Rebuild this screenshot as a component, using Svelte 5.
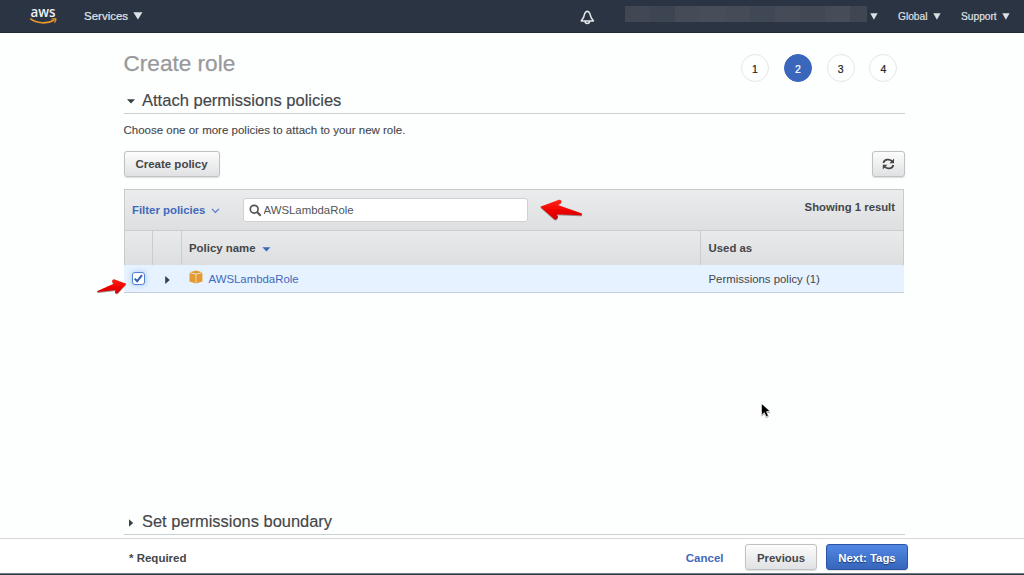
<script>
  const steps = [1, 2, 3, 4];
  const current = 2;
  let query = $state('AWSLambdaRole');
  let checked = $state(true);
  const mosaic = ['#414854', '#3e4552', '#454c58', '#474e5a', '#454c58', '#414855', '#454c58', '#424955', '#464d58', '#404753'];
</script>

<div class="page">
  <header>
    <svg class="logo" width="28" height="19" viewBox="0 0 28 19">
      <text x=".5" y="10.6" textLength="25" lengthAdjust="spacingAndGlyphs">aws</text>
      <path d="M.3 12.7C6.5 17.7 17.5 18.1 24 14.3" fill="none" stroke="#e9962a" stroke-width="1.6" />
      <path d="M21.2 13.1c2-1.1 4.6-1 5.1-.4.3.8-.4 3-1.8 4.4l.5-3.4z" fill="#e9962a" stroke="#e9962a" stroke-width=".4" />
    </svg>
    <span class="services">Services</span>
    <svg class="tri big" width="10" height="8" viewBox="0 0 10 8"><path d="M.3.3h9.2L4.9 7.5z" /></svg>
    <svg class="bell" width="15" height="15" viewBox="0 0 15 15" fill="none" stroke="#e2e7e8" stroke-width="1.5" stroke-linejoin="round">
      <path d="M7.3 1.2C5.1 1.6 4.5 3.6 4 6 3.5 8.2 2.3 9 1.2 10.9h12.2C12.3 9 11.1 8.2 10.6 6 10.1 3.6 9.5 1.6 7.3 1.2zM5 11c.1 3.3 4.5 3.3 4.6 0" />
    </svg>
    <div class="account">
      {#each mosaic as color}<i style="background:{color}"></i>{/each}
    </div>
    <svg class="tri acct" width="8" height="7" viewBox="0 0 8 7"><path d="M.3.3h7.3L3.9 6.8z" /></svg>
    <span class="global">Global</span>
    <svg class="tri" width="8" height="7" viewBox="0 0 8 7"><path d="M.3.3h7.3L3.9 6.8z" /></svg>
    <span class="support">Support</span>
    <svg class="tri last" width="8" height="7" viewBox="0 0 8 7"><path d="M.3.3h7.3L3.9 6.8z" /></svg>
  </header>

  <main>
    <div class="title">
      <h1>Create role</h1>
      <div class="steps">
        {#each steps as step}<span class:active={step === current}>{step}</span>{/each}
      </div>
    </div>
    <h2>
      <svg width="8" height="5" viewBox="0 0 8 5"><path d="M0 .2h8L4 4.6z" /></svg>
      Attach permissions policies
    </h2>
    <p>Choose one or more policies to attach to your new role.</p>
    <div class="actions">
      <button class="create">Create policy</button>
      <button class="refresh" aria-label="Refresh">
        <svg width="13" height="12" viewBox="0 0 13 12">
          <path d="M1.5 5C2 1.5 7 .3 10 3.1M11.3 7C10.7 10.5 6 11.6 2.8 8.9" fill="none" stroke="#444" stroke-width="1.7" />
          <path d="M12 .5v4.7H7.5zM.8 11.5V6.8h4.5z" fill="#444" />
        </svg>
      </button>
    </div>

    <section class="table">
      <div class="filter">
        <span class="filter-label">Filter policies</span>
        <svg class="chev" width="9" height="6" viewBox="0 0 9 6"><path d="M.9.8 4.4 4.5 7.9.8" fill="none" stroke="#5479c7" stroke-width="1.2" /></svg>
        <label class="search">
          <svg width="13" height="13" viewBox="0 0 13 13" fill="none" stroke="#555"><circle cx="5.2" cy="5.2" r="3.9" stroke-width="1.7" /><path d="m8.1 8.1 3.6 3.7" stroke-width="2.1" /></svg>
          <input bind:value={query} aria-label="Search" />
        </label>
        <span class="results">Showing 1 result</span>
      </div>
      <div class="row head">
        <span></span><span></span>
        <span class="name">Policy name <svg width="9" height="5" viewBox="0 0 9 5"><path d="M.4.2h8L4.4 4.6z" fill="#3b67b9" /></svg></span>
        <span class="used">Used as</span>
      </div>
      <div class="row item">
        <button class="check" aria-label="Select policy" onclick={() => (checked = !checked)}>
          {#if checked}
            <svg width="11" height="11" viewBox="0 0 11 11"><path d="m1.7 5.6 2.5 2.6L9 2.1" fill="none" stroke="#315fb5" stroke-width="2" /></svg>
          {/if}
        </button>
        <svg class="expand" width="5" height="8" viewBox="0 0 5 8"><path d="M.2 0v8L4.8 4z" fill="#3c3f42" /></svg>
        <span class="name">
          <svg class="cube" width="14" height="14" viewBox="0 0 14 14">
            <path d="M.5 2.9 6.6 4.4v9.1L.5 11.6zM13.4 2.9 7.3 4.4v9.1l6.1-1.9z" fill="#e39a2e" />
            <path d="M.7 2.3 7 .5l6.3 1.8L7 3.8z" fill="#e39a2e" />
          </svg>
          <span class="link">AWSLambdaRole</span>
        </span>
        <span class="used">Permissions policy (1)</span>
      </div>
    </section>

    <h2 class="boundary">
      <svg width="8" height="8" viewBox="0 0 8 8"><path d="M2 .2v7.6L6.2 4z" /></svg>
      Set permissions boundary
    </h2>
  </main>

  <footer>
    <span class="required">* Required</span>
    <span class="cancel">Cancel</span>
    <button class="previous">Previous</button>
    <button class="next">Next: Tags</button>
  </footer>
  <div class="strip"></div>

  <svg class="overlay" width="1024" height="575" viewBox="0 0 1024 575">
    <defs>
      <linearGradient id="red" x1="0" y1="0" x2="0" y2="1"><stop stop-color="#ff2417" /><stop offset=".5" stop-color="#f30500" /><stop offset="1" stop-color="#cf0000" /></linearGradient>
      <filter id="shade" x="-20%" y="-20%" width="140%" height="150%"><feDropShadow dx="0" dy=".7" stdDeviation=".6" flood-color="#412020" flood-opacity=".7" /></filter>
    </defs>
    <g fill="url(#red)" filter="url(#shade)">
      <path d="M540.3 206.7 559.2 199.8Q562 200 561.2 202.5L557.8 204.9 581.3 213.2Q583 214.8 581 215.2L556.8 214.2 558 217Q556.8 220.4 554.2 219z" />
      <path d="M126.3 283.8 114 279.2Q111.8 279.4 112.2 281.8L113.7 283.8 97.5 291.1Q96.5 292 98 292.1L115.7 290.1 115 292Q115.5 294.2 118 292.8z" />
    </g>
    <path d="M761.7 403.7v11.2l2.6-2.4 2 4.1 2-.9-1.9-4 3.4-.4z" fill="#000" stroke="#fff" stroke-width=".7" filter="url(#shade)" />
    <path d="M762 404.4v9.5l2.4-2.3 2.1 4.1 1-.5-2-4.1 3.4-.3z" fill="#000" />
  </svg>
</div>

<style>
  :global(body) { margin: 0; background: #fdfefe; }
  .page { position: relative; width: 1024px; height: 575px; overflow: hidden; display: flex; flex-direction: column; background: #fdfefe; color: #444649; font: 11.5px "Liberation Sans", Arial, sans-serif; white-space: nowrap; }
  .page * { box-sizing: border-box; }
  svg { display: block; flex: none; }
  header { height: 33px; flex: none; display: flex; align-items: center; background: #2b3443; border-bottom: 1px solid #222b38; color: #e1e5e8; padding-left: 30px; }
  .logo { overflow: visible; margin-top: -1px; }
  .logo text { font: 600 13.5px "Open Sans", sans-serif; fill: #eef3f4; }
  .services { width: 45px; margin-left: 26px; -webkit-text-stroke: .2px; }
  .tri { fill: #dce1e4; margin-left: 6px; }
  .tri.big { margin-left: 4px; }
  .bell { margin: 3px 0 0 436.5px; }
  .account { width: 242px; height: 16px; margin: -5px 0 0 30.5px; display: grid; grid-template-columns: repeat(9, 25px) 17px; }
  .tri.acct { margin-left: 3px; }
  .global { font-size: 10.2px; width: 29px; margin-left: 20px; -webkit-text-stroke: .15px; }
  .support { font-size: 10.2px; width: 36px; margin-left: 20px; -webkit-text-stroke: .15px; }
  .tri.last { margin-left: 5px; }
  main { width: 781px; height: 505px; margin-left: 124px; flex: none; display: flex; flex-direction: column; }
  .title { height: 54px; display: flex; justify-content: space-between; flex: none; }
  h1 { font: 22.6px/26px "Liberation Sans", Arial, sans-serif; color: #98999b; margin: 18px 0 0 -.5px; -webkit-text-stroke: .25px; }
  .steps { display: flex; gap: 14.8px; margin: 21px 7.6px 0 0; }
  .steps span { width: 28px; height: 28px; border: 1px solid #e3e7e7; border-radius: 50%; display: grid; place-items: center; padding-top: 1px; font-size: 10.5px; color: #222; -webkit-text-stroke: .2px; }
  .steps .active { background: #3a66bb; border-color: #3a66bb; color: #fff; }
  h2 { display: flex; align-items: center; gap: 7px; height: 27px; flex: none; margin: 0; padding: 1px 0 0 3px; border-bottom: 1px solid #cbd0d0; font-size: 16.55px; font-weight: 400; -webkit-text-stroke: .15px; color: #444649; }
  h2 svg { fill: #3c3f42; margin-top: 2px; }
  p { margin: 9px 0 0 -.5px; line-height: 14px; height: 28px; font-size: 11.5px; -webkit-text-stroke: .1px; }
  button { font: 700 11.4px "Liberation Sans", Arial, sans-serif; color: #444649; border: 1px solid #bfc1c3; border-radius: 3px; background: linear-gradient(#fcfcfc, #e0e1e3); padding: 0; box-shadow: 0 .5px 1px #0002; }
  .actions { display: flex; justify-content: space-between; height: 38px; flex: none; }
  .create { width: 96px; height: 26px; padding-right: 1px; font-size: 11.5px; }
  .refresh { width: 33px; height: 26px; display: grid; place-items: center; }
  .table { width: 780px; border-top: 1px solid #c6c8ca; flex: none; }
  .filter { height: 40px; display: flex; align-items: center; padding-left: 7px; background: linear-gradient(#ebecee, #dedfe1); border: solid #c9cbcd; border-width: 0 1px; }
  .filter-label { width: 73px; color: #4169bc; font-weight: 700; font-size: 11.4px; }
  .chev { margin: 2px 0 0 6px; }
  .search { display: flex; align-items: center; width: 285px; height: 24px; margin-left: 22.5px; background: #fff; border: 1px solid #cfd1d3; border-radius: 3px; padding-left: 5px; }
  input { width: 240px; border: 0; outline: 0; padding: 0; margin-left: 2px; background: none; font: 11.4px "Liberation Sans", Arial, sans-serif; color: #515457; }
  .results { margin: -7px 8px 0 auto; font-weight: 700; font-size: 11.3px; }
  .row { display: grid; grid-template-columns: 28px 29px 519px 1fr; }
  .head { height: 35px; border: 1px solid #c9cbcd; border-bottom: 0; background: linear-gradient(#e9eaec, #dddee0); font-weight: 700; font-size: 11.4px; }
  .head > span { display: flex; align-items: center; border-right: 1px solid #cacccd; }
  .head > .used { border: 0; }
  .head .name { gap: 7px; padding-left: 7px; }
  .head .name svg { margin-top: 2px; }
  .used { padding-left: 7.5px; }
  .item { height: 28px; align-items: center; padding: 0 0 0 1px; background: #e6f2ff; border-bottom: 1px solid #c5cfda; font-size: 11.4px; }
  .check { width: 13px; height: 13px; margin-left: 7px; background: #fff; border: 1px solid #5381d2; border-radius: 3px; display: grid; place-items: center; box-shadow: 0 0 4px 1px #8cb8f580; }
  .expand { margin: 3px 0 0 12px; }
  .item .name { display: flex; align-items: center; gap: 6px; padding-left: 7px; }
  .cube { margin-top: -3px; margin-left: -.5px; }
  .link { color: #4169bc; }
  .boundary { margin-top: auto; margin-bottom: 3px; font-size: 16.45px; }
  footer { height: 35px; flex: none; display: flex; align-items: center; padding: 2px 116px 0 129px; border-top: 1px solid #d5d9d9; font-weight: 700; background: #fff; }
  .required { margin-top: 1px; }
  .cancel { color: #4169bc; margin: 1px 21.5px 0 auto; }
  .previous { width: 72px; height: 26px; margin-right: 9px; padding-top: 1px; }
  .next { width: 82px; height: 26px; padding-top: 1px; color: #fff; border-color: #2b55a3; background: linear-gradient(#5187e4, #3766bb); text-shadow: 0 1px 1px #173873; }
  .strip { height: 2px; flex: none; background: linear-gradient(#737c86 50%, #2d3948 50%); }
  .overlay { position: absolute; inset: 0; pointer-events: none; }
</style>
